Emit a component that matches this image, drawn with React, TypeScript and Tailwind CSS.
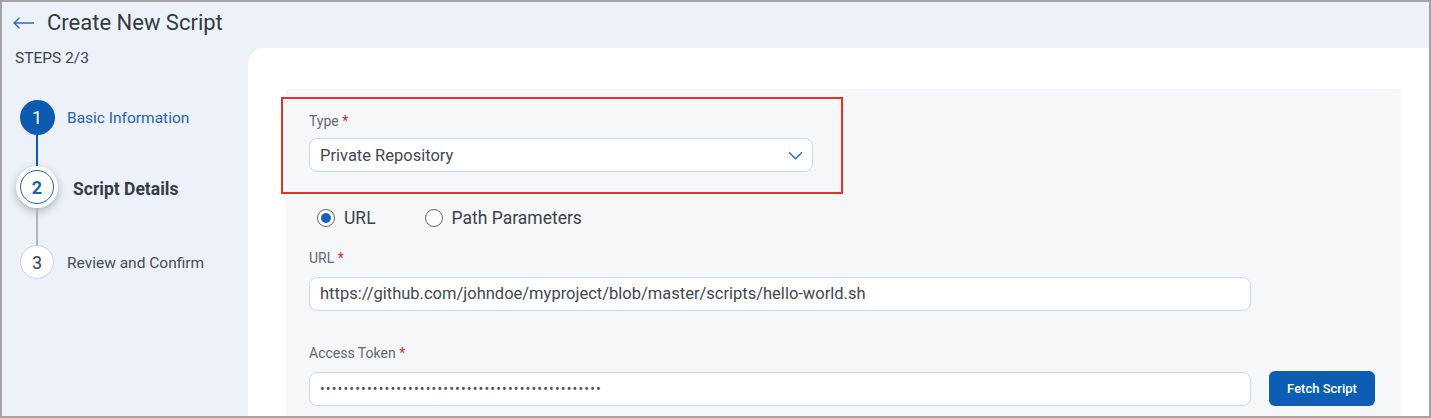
const font = { fontFamily: 'Roboto, "Liberation Sans", sans-serif' };

function Label({ text }: { text: string }) {
  return (
    <div className="text-[14px] leading-[18px] text-[#5f6773]">
      {text} <span className="text-[#e0251f]">*</span>
    </div>
  );
}

function Radio({ checked, label }: { checked?: boolean; label: string }) {
  return (
    <label className="flex items-center gap-[9px] text-[17.5px] leading-5 text-[#3a424c]">
      <span className="w-[18px] h-[18px] rounded-full border-[1.5px] border-[#5b6470] bg-white flex items-center justify-center">
        {checked && <span className="w-[10px] h-[10px] rounded-full bg-[#1462bd]" />}
      </span>
      {label}
    </label>
  );
}

export default function App() {
  return (
    <div
      style={font}
      className="w-[1431px] h-[418px] border-2 border-[#a3a3a3] bg-[#edf2fa] overflow-hidden flex flex-col"
    >
      {/* header */}
      <div className="h-[46px] shrink-0 flex items-center pl-[11px] pb-[4px] gap-[13px]">
        <svg width="21" height="12" viewBox="0 0 21 12" fill="none" stroke="#2470c4" strokeWidth="1.4">
          <path d="M1 6h20M6.5 0.8L1 6l5.5 5.2" />
        </svg>
        <h1 className="text-[22px] leading-6 text-[#323a44]">Create New Script</h1>
      </div>

      <div className="flex flex-1 min-h-0">
        {/* sidebar */}
        <aside className="w-[246px] shrink-0">
          <div className="pl-[13px] text-[15.5px] leading-5 text-[#3a424c]">STEPS 2/3</div>
          <div className="mt-[32px] pl-[14px] flex flex-col">
            <div className="flex items-center gap-[9px]">
              <div className="w-[42px] flex justify-center">
                <div className="w-[35px] h-[35px] rounded-full bg-[#0b5cb0] text-white text-[18px] flex items-center justify-center">
                  1
                </div>
              </div>
              <span className="pt-[3px] text-[15.5px] text-[#2564b1]">Basic Information</span>
            </div>
            <div className="w-[42px] flex justify-center">
              <div className="w-[2px] h-[31px] bg-[#0b5cb0]" />
            </div>
            <div className="flex items-center gap-[15px]">
              <div className="w-[42px] h-[42px] rounded-full bg-white shadow-[0_3px_8px_rgba(0,0,0,0.28)] flex items-center justify-center">
                <div className="w-[34px] h-[34px] rounded-full border border-[#1e66b8] text-[#1a5fae] font-bold text-[18px] flex items-center justify-center">
                  2
                </div>
              </div>
              <span className="pt-[4px] text-[17.5px] font-bold text-[#343c46]">Script Details</span>
            </div>
            <div className="w-[42px] flex justify-center">
              <div className="w-[2px] h-[37px] bg-[#aab6c3]" />
            </div>
            <div className="flex items-center gap-[9px]">
              <div className="w-[42px] flex justify-center">
                <div className="w-[34px] h-[34px] rounded-full bg-white border border-[#c9d1da] text-[#3a424c] text-[18px] flex items-center justify-center">
                  3
                </div>
              </div>
              <span className="pt-[3px] text-[15.5px] text-[#444c56]">Review and Confirm</span>
            </div>
          </div>
        </aside>

        {/* main card */}
        <main className="flex-1 bg-white rounded-tl-[16px] pt-[41px] pl-[38px] pr-[28px]">
          <div className="h-full bg-[#f6f7f9] pl-[23px] pt-[23px]">
            <div className="relative w-[504px]">
              <div className="absolute left-[-28px] top-[-15px] w-[562px] h-[97px] border-2 border-[#e5302c] pointer-events-none" />
              <Label text="Type" />
              <div className="mt-[8px] h-[34px] rounded-lg border border-[#c6daef] bg-white flex items-center justify-between pl-[10px] pr-[9px] text-[16.5px] text-[#3f4752]">
                <span className="pt-[3px]">Private Repository</span>
                <svg width="15" height="9" viewBox="0 0 15 9" fill="none" stroke="#2a6fc2" strokeWidth="1.5">
                  <path d="M1 1.2l6.5 6.5L14 1.2" />
                </svg>
              </div>
            </div>

            <div className="mt-[36px] pl-[8px] flex items-center gap-[49px]">
              <Radio checked label="URL" />
              <Radio label="Path Parameters" />
            </div>

            <div className="mt-[21px]">
              <Label text="URL" />
              <div className="mt-[10px] w-[942px] h-[34px] rounded-lg border border-[#c6daef] bg-white flex items-center pl-[10px] pt-[1px] text-[16.5px] text-[#3f4752]">
                https://github.com/johndoe/myproject/blob/master/scripts/hello-world.sh
              </div>
            </div>

            <div className="mt-[33px]">
              <Label text="Access Token" />
              <div className="mt-[9px] flex items-center gap-[18px]">
                <div className="w-[942px] h-[34px] rounded-lg border border-[#c6daef] bg-white flex items-center pl-[10px] pt-[2px] text-[14px] tracking-[1.15px] text-[#4a525c]">
                  {'•'.repeat(48)}
                </div>
                <button className="w-[106px] h-[35px] rounded-md bg-[#0b5eb3] text-white text-[13px] font-medium">
                  Fetch Script
                </button>
              </div>
            </div>
          </div>
        </main>
      </div>
    </div>
  );
}
